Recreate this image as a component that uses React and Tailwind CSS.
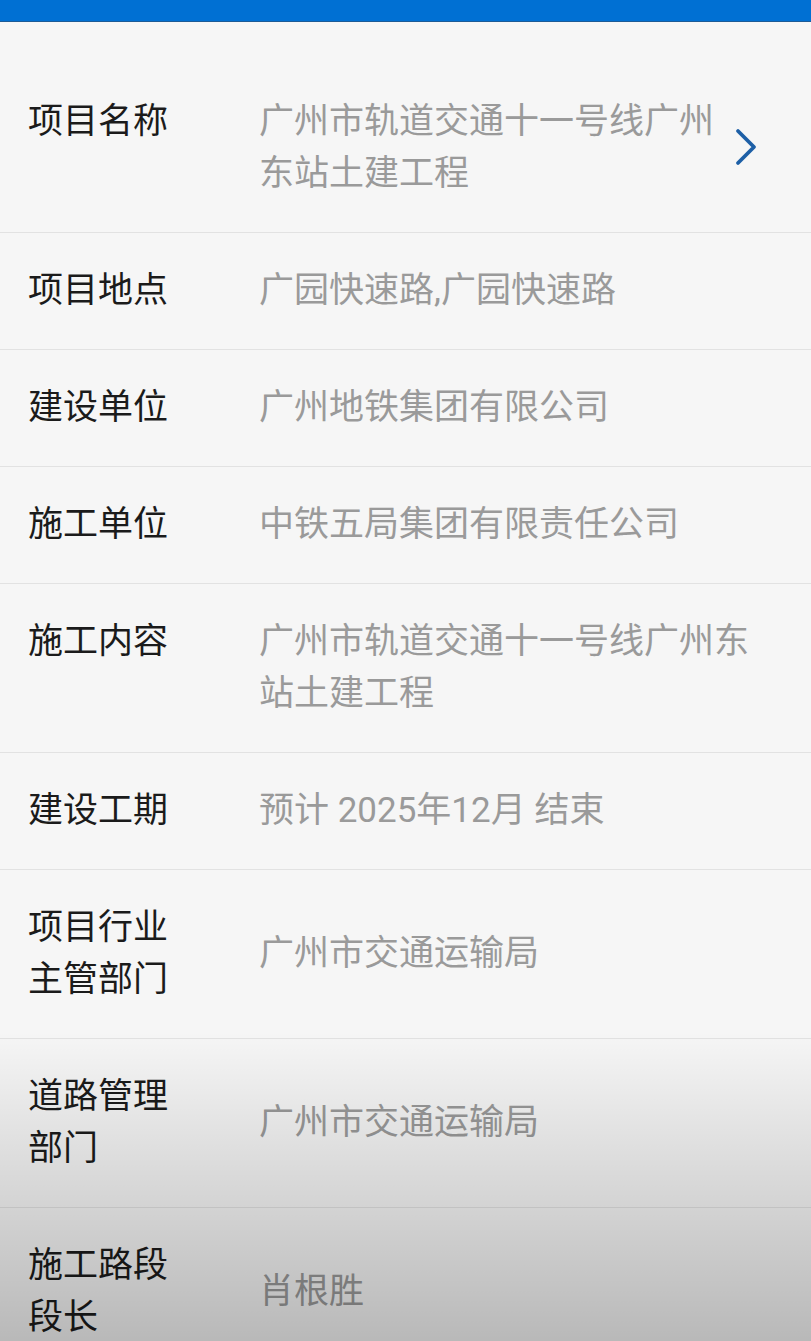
const rows = [
  { label: '项目名称', value: '广州市轨道交通十一号线广州东站土建工程', link: true },
  { label: '项目地点', value: '广园快速路,广园快速路' },
  { label: '建设单位', value: '广州地铁集团有限公司' },
  { label: '施工单位', value: '中铁五局集团有限责任公司' },
  { label: '施工内容', value: '广州市轨道交通十一号线广州东站土建工程' },
  { label: '建设工期', value: '预计 2025年12月 结束' },
  { label: ['项目行业', '主管部门'], value: '广州市交通运输局', center: true },
  { label: ['道路管理', '部门'], value: '广州市交通运输局', center: true },
  { label: ['施工路段', '段长'], value: '肖根胜', center: true },
]

const Chevron = () => (
  <svg viewBox="0 0 24 42" className="ml-[8px] h-[42px] w-[24px] shrink-0 self-center" fill="none">
    <polyline
      points="4,4 20,20 4,36"
      stroke="#1d5fa6"
      strokeWidth="3.8"
      strokeLinecap="round"
      strokeLinejoin="round"
    />
  </svg>
)

const InfoRow = ({ label, value, link, center }) => (
  <div
    className={`flex items-start border-b border-[#e2e2e2] py-[32px] pl-[28px] ${link ? 'pr-[53px]' : 'pr-[40px]'}`}
  >
    <div className="w-[231px] shrink-0 text-[#1b1b1b]">
      {Array.isArray(label) ? label.map((l) => <div key={l}>{l}</div>) : label}
    </div>
    <div className={`flex-1 text-[#9a9a9a] ${center ? 'self-center' : ''}`}>{value}</div>
    {link && <Chevron />}
  </div>
)

export default function App() {
  return (
    <div
      className="relative h-[1341px] overflow-hidden bg-[#f6f6f6] text-[35px] leading-[52px]"
      style={{ fontFamily: '"Roboto", "Noto Sans CJK SC", sans-serif' }}
    >
      <div className="h-[22px] border-b border-[#1d5b96] bg-[#0070d3]" />
      <div className="mt-[42px]">
        {rows.map((r) => (
          <InfoRow key={Array.isArray(r.label) ? r.label.join('') : r.label} {...r} />
        ))}
      </div>
      <div className="pointer-events-none absolute inset-x-0 bottom-0 h-[310px] bg-gradient-to-b from-transparent to-black/25" />
    </div>
  )
}
